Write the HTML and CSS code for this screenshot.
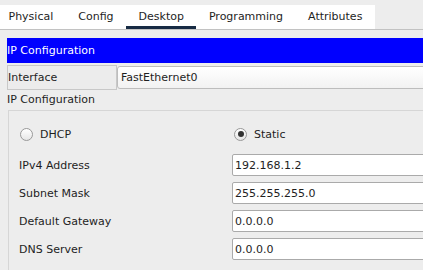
FILE: index.html
```html
<!DOCTYPE html>
<html lang="en">
<head>
    <meta charset="UTF-8">
    <meta name="viewport" content="width=device-width, initial-scale=1.0">
    <title>PC0 - Desktop</title>
    <link rel="stylesheet" href="styles.css">
</head>
<body>

    <div class="tabbar">
        <div class="tabs">
            <div class="tab">Physical</div>
            <div class="tab">Config</div>
            <div class="tab active">Desktop</div>
            <div class="tab">Programming</div>
            <div class="tab">Attributes</div>
        </div>
    </div>

    <div class="panel">
        <div class="title-bar">IP Configuration</div>

        <div class="iface-row">
            <div class="iface-label">Interface</div>
            <div class="iface-select">FastEthernet0</div>
        </div>

        <div class="section-label">IP Configuration</div>

        <div class="group">
            <div class="radio-row">
                <label class="radio-col">
                    <span class="radio"></span>
                    DHCP
                </label>
                <label class="radio-col">
                    <span class="radio checked"></span>
                    Static
                </label>
            </div>
            <div class="field-row">
                <span class="field-label">IPv4 Address</span>
                <input type="text" value="192.168.1.2">
            </div>
            <div class="field-row">
                <span class="field-label">Subnet Mask</span>
                <input type="text" value="255.255.255.0">
            </div>
            <div class="field-row">
                <span class="field-label">Default Gateway</span>
                <input type="text" value="0.0.0.0">
            </div>
            <div class="field-row">
                <span class="field-label">DNS Server</span>
                <input type="text" value="0.0.0.0">
            </div>
        </div>
    </div>

</body>
</html>
```

FILE: styles.css
```css
body {
    margin: 0;
    font-family: "DejaVu Sans", sans-serif;
    font-size: 11px;
    color: #1e1e1e;
    background: #ededed;
    height: 270px;
    overflow: hidden;
}
.tabbar {
    padding-top: 5px;
    border-bottom: 1px solid #c2c2c2;
}
.tabs {
    display: inline-flex;
    background: #fff;
    margin-left: -4px;
    height: 24px;
}
.tab {
    padding: 0 12.5px;
    line-height: 24px;
    cursor: pointer;
}
.tab.active {
    box-shadow: inset 0 -3px 0 #172b44;
}
.panel {
    padding: 8px 0 0 7px;
    width: 560px;
}
.title-bar {
    background: #0000ff;
    color: #fff;
    height: 25px;
    line-height: 25px;
}
.iface-row {
    display: flex;
    margin-top: 2px;
}
.iface-label {
    width: 108px;
    height: 23px;
    line-height: 23px;
    border: 1px solid #c8c8c8;
    background: #ececec;
}
.iface-select {
    flex: 1;
    height: 21px;
    line-height: 21px;
    margin-top: 1px;
    padding-left: 3px;
    border: 1px solid #bdbdbd;
    border-radius: 3px;
    background: linear-gradient(#ffffff, #f2f2f2);
}
.section-label {
    height: 20px;
    line-height: 20px;
}
.group {
    margin-left: 1px;
    border: 1px solid #d6d6d6;
    padding: 12px 0 20px 10px;
}
.radio-row {
    display: flex;
    height: 22px;
    margin-bottom: 9px;
}
.radio-col {
    width: 213px;
    display: flex;
    align-items: center;
    gap: 7px;
    padding-left: 1px;
}
.radio {
    width: 11px;
    height: 11px;
    border: 1px solid #999;
    border-radius: 50%;
    background: linear-gradient(#ffffff, #e6e6e6);
    position: relative;
}
.radio.checked::after {
    content: "";
    position: absolute;
    left: 2.5px;
    top: 2.5px;
    width: 6px;
    height: 6px;
    border-radius: 50%;
    background: #333;
}
.field-row {
    display: flex;
    align-items: center;
    height: 22px;
    margin-bottom: 6px;
}
.field-label {
    width: 213px;
}
.field-row input {
    width: 250px;
    height: 22px;
    box-sizing: border-box;
    border: 1px solid #aaa;
    border-radius: 2px;
    padding: 0 2px;
    font-family: "DejaVu Sans", sans-serif;
    font-size: 11px;
    color: #1e1e1e;
    background: #fff;
    outline: none;
}
```
